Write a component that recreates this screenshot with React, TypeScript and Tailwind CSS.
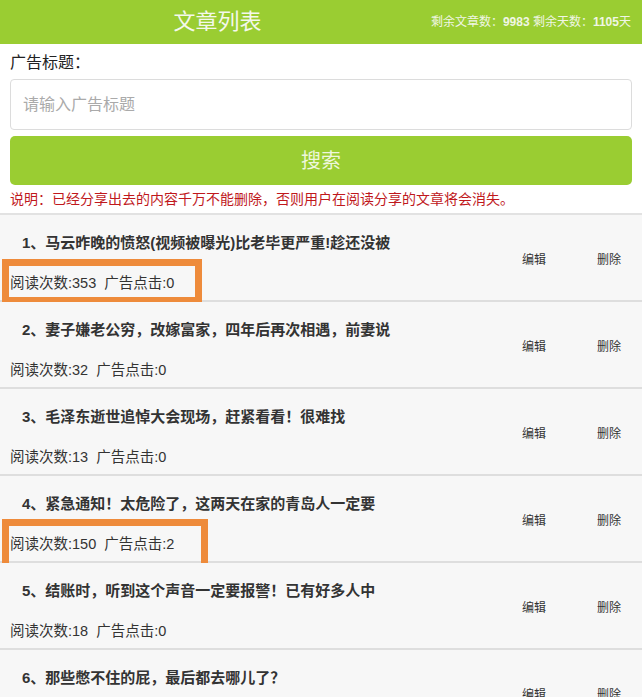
import React from "react";

const rows = [
  { t: "1、马云昨晚的愤怒(视频被曝光)比老毕更严重!趁还没被", r: 353, c: 0 },
  { t: "2、妻子嫌老公穷，改嫁富家，四年后再次相遇，前妻说", r: 32, c: 0 },
  { t: "3、毛泽东逝世追悼大会现场，赶紧看看！很难找", r: 13, c: 0 },
  { t: "4、紧急通知！太危险了，这两天在家的青岛人一定要", r: 150, c: 2 },
  { t: "5、结账时，听到这个声音一定要报警！已有好多人中", r: 18, c: 0 },
  { t: "6、那些憋不住的屁，最后都去哪儿了？", r: 0, c: 0 },
];

const font = { fontFamily: '"Liberation Sans", "Noto Sans CJK SC", sans-serif' };

export default function App() {
  return (
    <div className="w-[642px] h-[697px] overflow-hidden bg-white text-[#333]" style={font}>
      <div className="h-[44px] bg-[#9acd32] flex items-center">
        <div className="flex-1 text-center text-[22px] text-[#f4f8ec] leading-none pl-[4px]">文章列表</div>
        <div className="pr-[11px] text-[12px] text-[#f0f6e4] whitespace-nowrap">
          剩余文章数：<b>9983</b> 剩余天数：<b>1105</b>天
        </div>
      </div>
      <div className="px-[10px]">
        <div className="h-[35px] flex items-center text-[16px] text-[#222] pt-[2px]">广告标题：</div>
        <div className="h-[51px] border border-[#dcdcdc] rounded-[4px] flex items-center px-[12px] text-[16px] text-[#aaa]">
          请输入广告标题
        </div>
        <div className="mt-[6px] h-[49px] bg-[#9acd32] rounded-[5px] flex items-center justify-center text-[20px] text-[#eef7dc]">
          搜索
        </div>
        <div className="h-[28px] flex items-center text-[14px] text-[#c0181c] whitespace-nowrap">
          说明：已经分享出去的内容千万不能删除，否则用户在阅读分享的文章将会消失。
        </div>
      </div>
      <div className="border-t-2 border-[#e2e2e2]">
        {rows.map((row, i) => (
          <div key={i} className="relative h-[87px] bg-[#f7f7f7] border-b-2 border-[#dedede] flex">
            <div className="flex-1 min-w-0">
              <div className="pt-[19px] pl-[22px] leading-[18px] text-[15px] font-bold text-[#333] whitespace-nowrap">
                {row.t}
              </div>
              <div className="mt-[22px] pl-[10px] leading-[18px] text-[14.5px] text-[#333] whitespace-nowrap">
                阅读次数:{row.r}&nbsp; 广告点击:{row.c}
              </div>
            </div>
            <div className="flex items-center gap-[51px] pr-[21px] pt-[4px] text-[12px] text-[#333]">
              <span>编辑</span>
              <span>删除</span>
            </div>
            {i === 0 && (
              <div className="absolute left-[2px] top-[44px] w-[200px] h-[45px] border-[7px] border-[#ee8b3b]" />
            )}
            {i === 3 && (
              <div className="absolute left-[2px] top-[43px] w-[206px] h-[53px] border-[7px] border-[#ee8b3b]" />
            )}
          </div>
        ))}
      </div>
    </div>
  );
}
